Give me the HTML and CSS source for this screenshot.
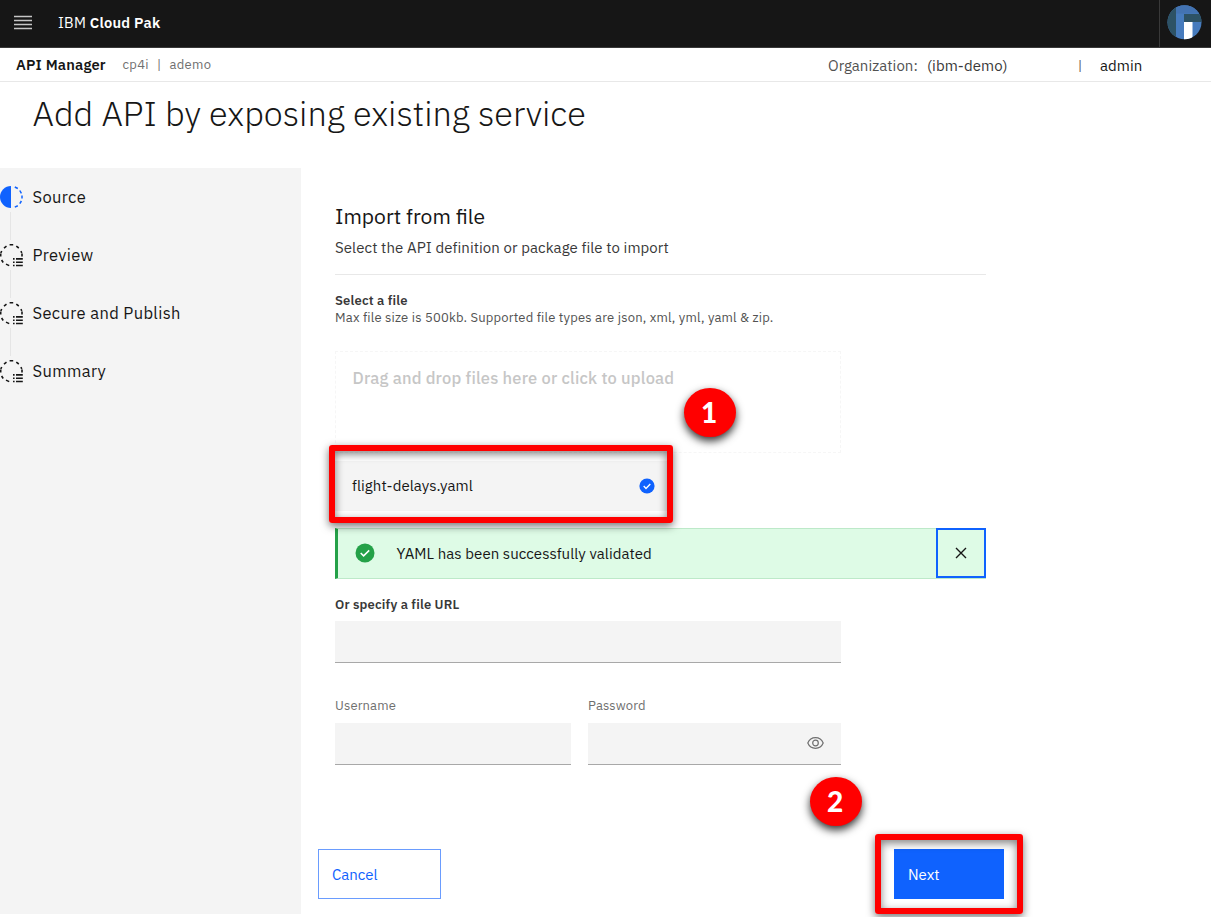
FILE: index.html
```html
<!DOCTYPE html>
<html lang="en">
<head>
<meta charset="utf-8">
<title>API Manager</title>
<link rel="stylesheet" href="styles.css">
</head>
<body>
<svg class="defs" width="0" height="0">
  <symbol id="pending" viewBox="0 0 24 24">
    <g fill="none" stroke="#161616" stroke-width="1.600">
      <path d="M9.600 1.700h3.600M16.300 3.200l2.500 1.800M20.900 8.200l.9 1.700M22 10.500v3M6.500 3.200L4 5.100M1.700 8l-.9 2M.7 10.500v3M1.600 17l1.600 2.500M6 21.100l3.200 1.500"/>
      <path d="M13 15.900h1.600M16 15.900h6.800M13 19.200h1.600M16 19.200h6.800M13 22.500h1.600M16 22.500h6.800"/>
    </g>
  </symbol>
</svg>

<header class="topbar">
  <svg class="menu-icon" width="18" height="15" viewBox="0 0 18 15"><path d="M0 1.500h18M0 5.500h18M0 9.500h18M0 13.500h18" stroke="#c6c6c6" stroke-width="1.400"/></svg>
  <div class="brand">IBM <b>Cloud Pak</b></div>
  <div class="profile">
    <svg width="35" height="35" viewBox="0 0 35 35">
      <clipPath id="disc"><circle cx="17.500" cy="17.200" r="17"/></clipPath>
      <g clip-path="url(#disc)">
        <path fill="#467bbd" d="M0 0h35v35H0z"/>
        <path fill="#2d5265" d="M0 0h9v35H0zM17 9h18v8H17z"/>
        <path fill="#4373b2" d="M9 0h26v8.500H9z"/>
        <path fill="#fff" d="M17 17h8.500v18H17z"/>
      </g>
    </svg>
  </div>
</header>

<nav class="subbar">
  <strong class="product">API Manager</strong>
  <span class="crumb cp">cp4i</span><span class="crumb sep">|</span><span class="crumb ademo">ademo</span>
  <div class="account">
    <span class="org">Organization:</span><span class="org-name">(ibm-demo)</span><span class="bar">|</span><span class="admin">admin</span>
  </div>
</nav>

<h1 class="title"><span>Add API by exposing existing service</span></h1>

<div class="layout">
  <aside class="steps">
    <div class="step">
      <svg width="23" height="24" viewBox="0 0 23 24"><path d="M11 1a11 11 0 0 0 0 22z" fill="#0f62fe"/><path d="M14.800 2l3 1.500M19.800 5.500l1.600 2.800M22 10.500v3M21.400 16l-1.600 2.700M17.800 20.700l-3 1.400" fill="none" stroke="#0f62fe" stroke-width="1.500"/></svg>
      <span>Source</span>
    </div>
    <div class="step"><svg width="24" height="24"><use href="#pending"/></svg><span>Preview</span></div>
    <div class="step"><svg width="24" height="24"><use href="#pending"/></svg><span>Secure and Publish</span></div>
    <div class="step"><svg width="24" height="24"><use href="#pending"/></svg><span>Summary</span></div>
  </aside>

  <main class="main">
    <div class="content">
      <h2 class="heading"><span>Import from file</span></h2>
      <p class="lead"><span>Select the API definition or package file to import</span></p>
      <p class="label-strong file-label"><span>Select a file</span></p>
      <p class="hint"><span>Max file size is 500kb. Supported file types are json, xml, yml, yaml &amp; zip.</span></p>
      <div class="dropzone"><span>Drag and drop files here or click to upload</span></div>
      <div class="file">
        <span>flight-delays.yaml</span>
        <svg width="16" height="16" viewBox="0 0 16 16"><circle cx="8" cy="8" r="7.600" fill="#0f62fe"/><path d="M4.700 8.100l2.300 2.300 4.300-4.300" fill="none" stroke="#fff" stroke-width="1.400"/></svg>
      </div>
      <div class="notice">
        <svg width="20" height="20" viewBox="0 0 20 20"><circle cx="10" cy="10" r="9.500" fill="#24a148"/><path d="M5.700 10l2.900 2.900 5.600-5.500" fill="none" stroke="#fff" stroke-width="1.500"/></svg>
        <span class="notice-text">YAML has been successfully validated</span>
        <button class="close" aria-label="Close"><svg width="12" height="12" viewBox="0 0 12 12"><path d="M1 1l10 10M11 1L1 11" stroke="#161616" stroke-width="1.400"/></svg></button>
      </div>
      <p class="label-strong url-label"><span>Or specify a file URL</span></p>
      <div class="input"></div>
      <div class="creds">
        <div><p class="label"><span>Username</span></p><div class="input"></div></div>
        <div><p class="label"><span>Password</span></p><div class="input">
          <svg width="17" height="14" viewBox="0 0 17 14" fill="none" stroke="#6f6f6f" stroke-width="1.200"><path d="M.8 7C2.200 3.600 5 1.700 8.500 1.700S14.800 3.600 16.200 7c-1.400 3.400-4.200 5.300-7.700 5.300S2.200 10.400.8 7z"/><circle cx="8.500" cy="7" r="2.800"/></svg>
        </div></div>
      </div>
    </div>
    <div class="actions">
      <button class="btn cancel"><span>Cancel</span></button>
      <button class="btn next"><span>Next</span></button>
    </div>
  </main>
</div>

<div class="mark mark-file"></div>
<div class="mark mark-next"></div>
<div class="badge badge-one">1</div>
<div class="badge badge-two">2</div>
</body>
</html>
```
FILE: styles.css
```css
* { box-sizing: border-box; }
body {
  position: relative;
  margin: 0;
  height: 917px;
  overflow: hidden;
  background: #fff;
  color: #161616;
  font: 15px/20px "IBM Plex Sans", Roboto, "Noto Sans", sans-serif;
}
h1, h2, p { margin: 0; font-weight: 400; }
button { font: inherit; padding: 0; border: 0; }
svg { display: block; flex: none; }
span { white-space: nowrap; }
.defs { position: absolute; }

.topbar { display: flex; align-items: center; height: 48px; background: #161616; color: #fff; border-bottom: 1px solid #393939; }
.menu-icon { margin: 0 26px 2px 14px; }
.brand { font-size: 14.7px; padding-bottom: 1px; letter-spacing: .23px; white-space: nowrap; }
.brand b { font-weight: 600; }
.profile { margin-left: auto; width: 52px; height: 47px; padding: 5px 0 0 7px; border-left: 1px solid #393939; }

.subbar { display: flex; align-items: center; height: 34px; padding-left: 16px; border-bottom: 1px solid #e8e8e8; }
.product { width: 106.500px; font-size: 14.7px; font-weight: 600; letter-spacing: .17px; white-space: nowrap; }
.crumb { font-size: 13px; color: #6f6f6f; letter-spacing: .3px; }
.cp { width: 34.500px; }
.sep { width: 12.500px; }
.account { display: flex; width: 383px; margin-left: auto; padding-top: 2px; letter-spacing: .05px; color: #393939; }
.org { width: 99px; color: #525252; }
.org-name { width: 151px; }
.bar { width: 22px; font-size: 13px; color: #525252; }
.admin { color: #161616; }

.title { height: 86px; padding: 9px 0 0 32.500px; font-size: 34.3px; line-height: 44px; font-weight: 300; }

.layout { display: grid; grid-template-columns: 301px 1fr; height: 749px; }
.steps { height: 746px; padding-top: 17px; background: #f4f4f4; }
.step { position: relative; display: flex; align-items: flex-start; height: 58px; font-size: 16.5px; line-height: 24px; letter-spacing: .36px; }
.step span { margin-left: auto; width: 268.500px; }
.step:not(:last-child)::after { content: ""; position: absolute; left: 10px; top: 27px; width: 1px; height: 28px; background: #e5e5e5; }

.main { padding: 36px 0 0 17px; }
.content { width: 651px; margin-left: 17px; }
.heading { font-size: 21.1px; line-height: 24px; }
.lead { height: 47px; padding-top: 10px; color: #393939; letter-spacing: .07px; border-bottom: 1px solid #e8e8e8; }
.label-strong { font-size: 13px; line-height: 17px; font-weight: 600; letter-spacing: .17px; color: #393939; }
.file-label { margin-top: 17px; }
.hint { font-size: 13px; line-height: 17px; letter-spacing: .19px; color: #525252; }
.dropzone { width: 506px; height: 102px; margin-top: 25px; padding: 16px 16px 16px 16.500px; border: 1px dashed #f6f6f6; color: #c6c6c6; font-size: 16.5px; font-weight: 500; letter-spacing: .18px; }
.file { display: flex; align-items: center; justify-content: space-between; width: 337px; height: 50px; margin-top: 8px; padding: 0 17px; background: #f4f4f4; letter-spacing: .06px; }
.notice { display: flex; height: 51px; margin-top: 17px; padding-left: 17px; background: #defbe6; border: 1px solid #bde9c9; border-left: 3px solid #24a148; border-right: 0; }
.notice > svg { margin-top: 14px; }
.notice-text { margin: 15px 0 0 21.500px; letter-spacing: .06px; }
.close { display: grid; place-items: center; width: 50px; height: 50px; margin: -1px 0 0 auto; border: 2px solid #0f62fe; background: #defbe6; }
.url-label { margin-top: 17px; height: 25px; }
.input { height: 42px; background: #f4f4f4; border-bottom: 1px solid #a8a8a8; }
.content > .input { width: 506px; }
.creds { display: grid; grid-template-columns: 236px 253px; gap: 17px; margin-top: 34px; }
.label { height: 26px; font-size: 13px; line-height: 17px; letter-spacing: .13px; color: #6f6f6f; }
.creds .input { display: flex; align-items: center; justify-content: flex-end; padding: 0 17px 1px 0; }
.actions { display: flex; justify-content: space-between; width: 686px; margin-top: 84px; }
.btn { width: 123px; height: 50px; padding: 1px 0 0 13px; text-align: left; background: #fff; color: #0f62fe; border: 1px solid #6a9cfe; }
.next { width: 110px; background: #0f62fe; color: #fff; border-color: #0f62fe; }

.mark { position: absolute; border: 6px solid #f00; border-radius: 3px; box-shadow: 0 3px 8px rgba(0,0,0,.55), inset 0 3px 8px rgba(0,0,0,.5); }
.mark-file { left: 329px; top: 445px; width: 344px; height: 78px; }
.mark-next { left: 875px; top: 834px; width: 148px; height: 80px; }
.badge { position: absolute; width: 52px; height: 49px; padding-right: 2px; border-radius: 50%; background: #f00; color: #fff; font: 900 28px/49px Lato, sans-serif; text-align: center; box-shadow: 0 4px 8px rgba(0,0,0,.8); }
.badge-one { left: 684px; top: 388px; }
.badge-two { left: 810px; top: 777px; }
```
